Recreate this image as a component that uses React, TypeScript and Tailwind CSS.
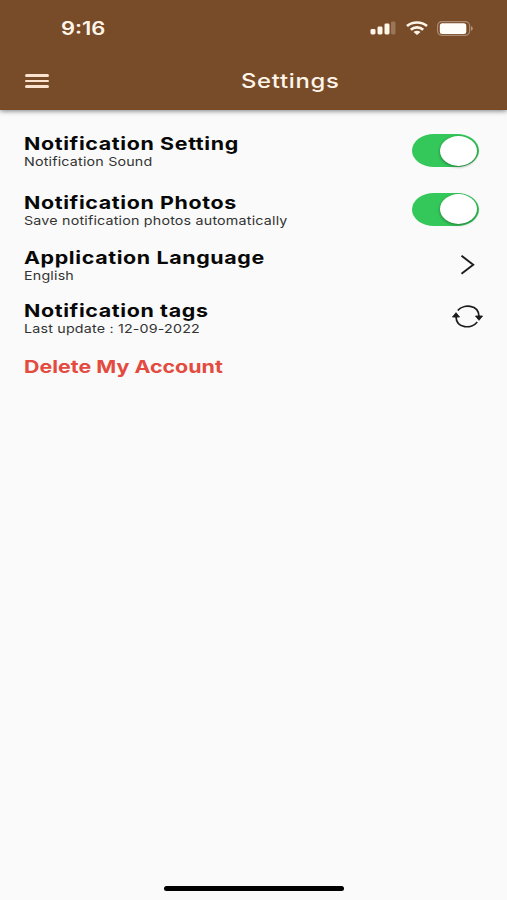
import type { ReactNode } from "react";

function StatusBar() {
  return (
    <div className="flex h-[56px] items-center justify-between pr-[34px] pl-[61px]">
      <span className="mt-[2px] origin-left scale-x-[1.22] text-[18px] leading-none font-semibold">9:16</span>
      <div className="flex items-center">
        <svg width="26" height="14" viewBox="0 0 26 14" fill="currentColor">
          <rect x="0.5" y="8" width="5" height="5.5" rx="1.4" />
          <rect x="7.5" y="5.5" width="5" height="8" rx="1.4" />
          <rect x="14.5" y="2.5" width="5" height="11" rx="1.4" />
          <rect x="21" y="0.5" width="4.5" height="13" rx="1.4" opacity="0.25" />
        </svg>
        <svg className="ml-[10px]" width="22" height="14" viewBox="0 0 22 14" fill="none" stroke="currentColor" strokeWidth="2.7">
          <path d="M1 5C6.5 0.3 15.5 0.3 21 5" />
          <path d="M4.8 8.7C8.2 5.7 13.8 5.7 17.2 8.7" />
          <path d="M7.5 11C9.5 9.3 12.5 9.3 14.5 11L11 14Z" fill="currentColor" stroke="none" />
        </svg>
        <svg className="ml-[9px]" width="36" height="15" viewBox="0 0 36 15">
          <rect x="0.6" y="0.6" width="32" height="13.8" rx="4.2" fill="none" stroke="currentColor" strokeWidth="1.2" opacity="0.38" />
          <rect x="2.8" y="2.2" width="26.5" height="10.8" rx="2.5" fill="#fffdf8" />
          <path d="M34 5.3C36.4 6 36.4 9 34 9.7Z" fill="currentColor" opacity="0.45" />
        </svg>
      </div>
    </div>
  );
}

function Header() {
  return (
    <header className="h-[110px] bg-[#784c29] text-[#fff5e9] shadow-[0_1px_5px_rgba(0,0,0,0.5)]">
      <StatusBar />
      <div className="flex h-[50px] items-center pl-[25px]">
        <button type="button" aria-label="Menu" className="flex w-6 flex-col gap-[3px]">
          <span className="h-[2.4px] rounded-full bg-[#fbe3d0]" />
          <span className="h-[2.4px] rounded-full bg-[#fbe3d0]" />
          <span className="h-[2.4px] rounded-full bg-[#fbe3d0]" />
        </button>
        <h1 className="ml-[192px] origin-left scale-x-[1.19] text-[20px] leading-none font-medium tracking-[0.6px]">
          Settings
        </h1>
      </div>
    </header>
  );
}

function Toggle() {
  return (
    <button
      type="button"
      role="switch"
      aria-checked="true"
      className="mr-[3px] flex h-[33px] w-[67px] items-center justify-end rounded-[22px/16.5px] bg-[#34c759] pr-[2px]"
    >
      <span className="h-[30px] w-[37px] rounded-[50%] bg-white shadow-[0_1px_3px_rgba(0,0,0,0.4)]" />
    </button>
  );
}

function SettingRow({ title, detail, height, children }: { title: string; detail: string; height: string; children: ReactNode }) {
  return (
    <div className={`flex items-center justify-between ${height}`}>
      <div className="origin-left scale-x-[1.19] pt-[3px] whitespace-nowrap">
        <p className="text-[18px] leading-[20px] font-bold tracking-[0.52px] text-[#080808]">{title}</p>
        <p className="text-[12px] leading-[16px] tracking-[0.16px] text-[#333]">{detail}</p>
      </div>
      {children}
    </div>
  );
}

export default function App() {
  return (
    <div className="flex h-[900px] w-[507px] flex-col overflow-hidden bg-[#fafafa] font-['Inter',sans-serif]">
      <Header />
      <main className="flex-1 pt-[21px] pr-[25px] pl-[24px]">
        <SettingRow title="Notification Setting" detail="Notification Sound" height="h-[39px]">
          <Toggle />
        </SettingRow>
        <SettingRow title="Notification Photos" detail="Save notification photos automatically" height="mt-[19px] h-[40px]">
          <Toggle />
        </SettingRow>
        <SettingRow title="Application Language" detail="English" height="mt-[16px] h-[39px]">
          <svg className="mr-[7px]" width="15" height="20" viewBox="0 0 15 20" fill="none" stroke="#1c1c1c" strokeWidth="1.9">
            <path d="M1.5 0.7L13.2 9.7L1.5 18.7" />
          </svg>
        </SettingRow>
        <SettingRow title="Notification tags" detail="Last update : 12-09-2022" height="mt-[13px] h-[40px]">
          <svg className="-mr-px" width="31" height="24" viewBox="0 0 31 24" fill="none" stroke="#1c1c1c" strokeWidth="1.7">
            <path d="M5.8 5.5C11 -1 26.8 -1 27 11.5" />
            <path d="M25.2 17C20 24 4.2 24 4 11.5" />
            <path d="M23.5 11H30.5L27 15.3Z" fill="#1c1c1c" strokeWidth="0.9" strokeLinejoin="round" />
            <path d="M0.5 12H7.5L4 7.7Z" fill="#1c1c1c" strokeWidth="0.9" strokeLinejoin="round" />
          </svg>
        </SettingRow>
        <button
          type="button"
          className="mt-[20px] block origin-left scale-x-[1.19] text-[18px] leading-[20px] font-bold text-[#e34b40]"
        >
          Delete My Account
        </button>
      </main>
      <div className="mb-[9px] ml-[164px] h-[5.5px] w-[180px] rounded-full bg-black" />
    </div>
  );
}
